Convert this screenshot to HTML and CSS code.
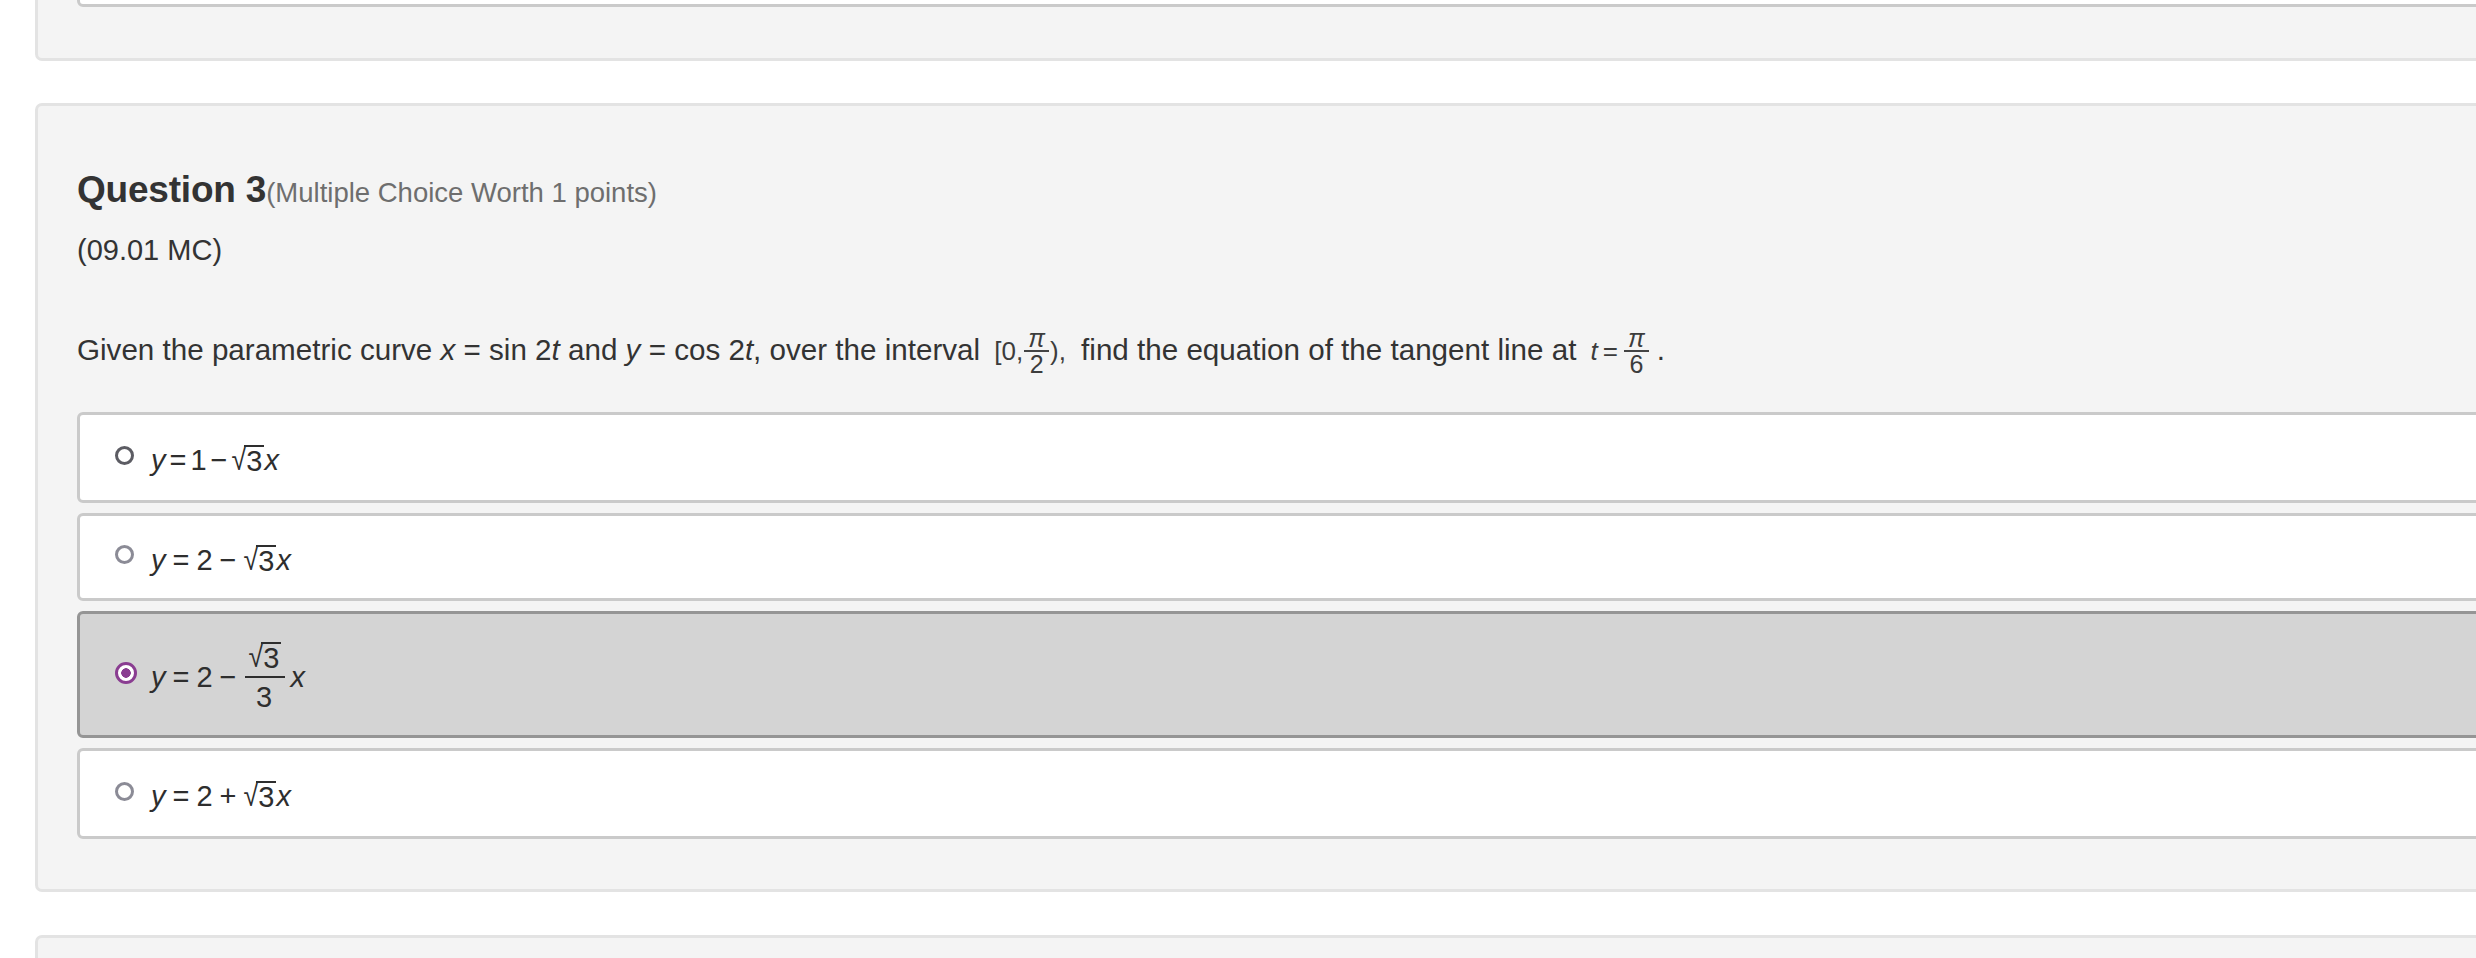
FILE: index.html
```html
<!DOCTYPE html>
<html lang="en">
<head>
<meta charset="utf-8">
<title>Question 3</title>
<link rel="stylesheet" href="styles.css">
</head>
<body>
<div class="page">
  <div class="panel panel-prev">
    <div class="option option-prev"></div>
  </div>

  <div class="panel">
    <h2 class="q-title">Question 3<span class="q-worth">(Multiple Choice Worth 1 points)</span></h2>
    <p class="q-code">(09.01 MC)</p>
    <p class="q-text">Given the parametric curve <i>x</i> = sin 2<i>t</i> and <i>y</i> = cos 2<i>t</i>, over the interval <span class="m-inline">[0,<span class="frac"><span class="num"><i>π</i></span><span class="den">2</span></span>),</span> find the equation of the tangent line at <span class="m-inline"><i>t</i><span class="eq">=</span><span class="frac"><span class="num"><i>π</i></span><span class="den">6</span></span></span>.</p>

    <div class="options">
      <label class="option">
        <span class="radio radio-dark"></span>
        <span class="math"><i>y</i><span class="op tight">=</span>1<span class="op tight">−</span><span class="sqrt"><span class="rad">√</span><span class="radicand">3</span></span><i>x</i></span>
      </label>
      <label class="option">
        <span class="radio"></span>
        <span class="math"><i>y</i><span class="op">=</span>2<span class="op">−</span><span class="sqrt"><span class="rad">√</span><span class="radicand">3</span></span><i>x</i></span>
      </label>
      <label class="option option-selected">
        <span class="radio radio-on"></span>
        <span class="math"><i>y</i><span class="op">=</span>2<span class="op">−</span><span class="frac frac-opt"><span class="num"><span class="sqrt"><span class="rad">√</span><span class="radicand">3</span></span></span><span class="den">3</span></span><i class="after-frac">x</i></span>
      </label>
      <label class="option">
        <span class="radio"></span>
        <span class="math"><i>y</i><span class="op">=</span>2<span class="op">+</span><span class="sqrt"><span class="rad">√</span><span class="radicand">3</span></span><i>x</i></span>
      </label>
    </div>
  </div>

  <div class="panel panel-next"></div>
</div>
</body>
</html>
```

FILE: styles.css
```css
html, body {
  margin: 0;
  padding: 0;
  background: #ffffff;
  overflow: hidden;
}

.page {
  width: 2700px;
  padding-left: 35px;
  font-family: "Liberation Sans", Arial, Helvetica, sans-serif;
  color: #333333;
}

.panel {
  box-sizing: border-box;
  width: 2600px;
  background: #f4f4f4;
  border: 3px solid #e3e3e3;
  border-radius: 7px;
  padding: 64px 0 50px 39px;
  margin-bottom: 43px;
}

.panel-prev {
  margin-top: -60px;
  padding-top: 0;
  padding-bottom: 51px;
  margin-bottom: 42px;
}

.option.option-prev {
  height: 64px;
  min-height: 0;
  padding: 0;
  margin: 0;
}

.panel-next {
  height: 200px;
}

.q-title {
  margin: 0;
  font-size: 37px;
  line-height: 40px;
  font-weight: bold;
  color: #333333;
  letter-spacing: -0.2px;
}

.q-worth {
  font-size: 27.5px;
  font-weight: normal;
  color: #6e6e6e;
  letter-spacing: 0;
}

.q-code {
  margin: 21px 0 0 0;
  font-size: 29px;
  line-height: 32px;
  color: #333333;
}

.q-text {
  margin: 62px 0 0 0;
  font-size: 29.6px;
  line-height: 44px;
  color: #333333;
  white-space: nowrap;
}

.q-text i {
  font-style: italic;
}

.m-inline {
  font-size: 26px;
  color: #3c3c3c;
  margin: 0 7px 0 6px;
}

.m-inline .eq {
  margin: 0 5px;
}

.frac {
  display: inline-flex;
  flex-direction: column;
  align-items: center;
  vertical-align: middle;
  margin: 0 1px;
}

.frac .num {
  line-height: 22px;
  padding: 0 4px 1px;
  border-bottom: 2px solid #444;
}

.frac .den {
  line-height: 24px;
}

.m-inline .frac {
  font-size: 25px;
  position: relative;
  top: -2px;
}

.options {
  margin-top: 34px;
}

.option {
  box-sizing: border-box;
  display: flex;
  align-items: center;
  min-height: 91px;
  margin-bottom: 10px;
  padding: 18px 33px 18px 35px;
  background: #ffffff;
  border: 3px solid #cacaca;
  border-radius: 6px;
  cursor: pointer;
}

.option:last-child {
  margin-bottom: 0;
}

.option:nth-child(2) {
  min-height: 88px;
}

.option-selected {
  background: #d4d4d4;
  border-color: #959595;
  min-height: 127px;
}

.radio {
  box-sizing: border-box;
  flex: none;
  width: 19px;
  height: 19px;
  border: 3px solid #8b8b96;
  border-radius: 50%;
  margin-right: 17px;
  margin-bottom: 4px;
}

.radio-dark {
  border-color: #5c5c63;
}

.radio-on {
  width: 22px;
  height: 22px;
  border: 3.5px solid #8a3d91;
  background: radial-gradient(circle, #8a3d91 0 4.5px, #ffffff 5px);
  margin-right: 14px;
  margin-bottom: 2px;
}

.math {
  font-size: 29px;
  line-height: 34px;
  color: #2e2e2e;
  white-space: nowrap;
  display: inline-flex;
  align-items: center;
  letter-spacing: 2px;
  margin-top: 6px;
}

.math .op {
  margin: 0 5px;
}

.math .op.tight {
  margin: 0 2px;
}

.sqrt {
  display: inline-flex;
  align-items: flex-end;
}

.rad {
  font-size: 27px;
  line-height: 30px;
  transform: scaleY(1.15);
  margin-right: -2px;
  letter-spacing: 0;
}

.radicand {
  border-top: 2px solid #2e2e2e;
  line-height: 28px;
  padding: 0 0 0 2px;
}

.frac-opt .num {
  border-bottom: 2px solid #2e2e2e;
  padding: 0 4px 3px;
  line-height: 34px;
}

.frac-opt .den {
  line-height: 38px;
}

.after-frac {
  margin-left: 4px;
}
```
